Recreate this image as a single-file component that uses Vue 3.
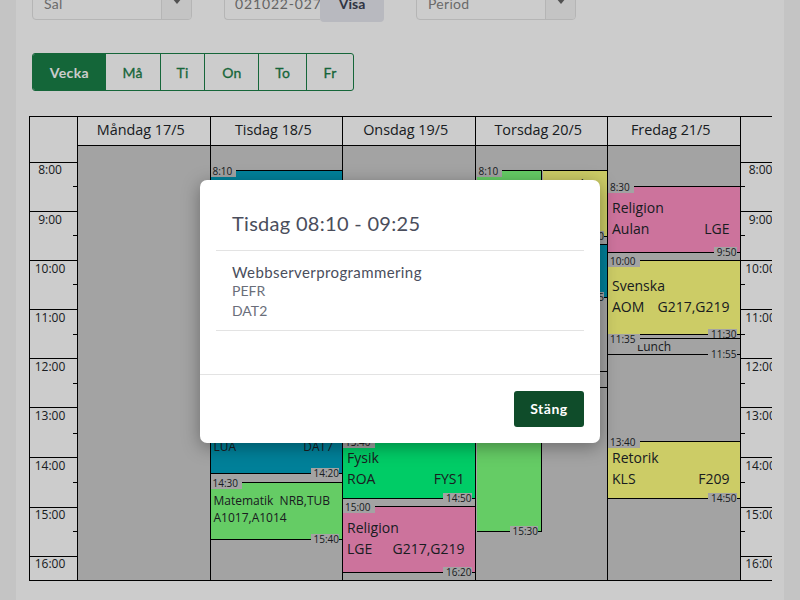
<script setup>
const rows = [
  { h:'8:00', height:49, tick:23, up:true },
  { h:'9:00', height:49, tick:23 },
  { h:'10:00', height:49, tick:23 },
  { h:'11:00', height:49, tick:24 },
  { h:'12:00', height:49, tick:24 },
  { h:'13:00', height:50, tick:25 },
  { h:'14:00', height:50, tick:24 },
  { h:'15:00', height:49, tick:23, up:true },
  { h:'16:00', height:24, tick:-9, up:true },
]
const pos = (t) => { const [h,m]=t.split(':').map(Number); return 15.8 + (h*60+m-480)*0.82 }
const st = (e) => {
  const s = { top: pos(e.from)+'px', height: (pos(e.to)-pos(e.from)+1)+'px', background: e.bg || 'transparent' }
  if (e.half==='l') { s.left='1px'; s.width='65.5px'; }
  if (e.half==='r') { s.left='67px'; s.right='0'; }
  return s
}
const T='#00a0c0', G='#7fff7f', Y='#ffff80', P='#ff90c4', B='#00ff80'
const days = [
  { name:'Måndag 17/5', events:[] },
  { name:'Tisdag 18/5', events:[
    { from:'8:10', to:'9:25', bg:T, a:'Webbserverprogrammering', b:'PEFR', c:'DAT2', small:true },
    { from:'12:55', to:'14:20', bg:T, a:'Webbserverprogrammering', b:'LUA', c:'DAT7', small:true },
    { from:'14:30', to:'15:40', bg:G, a:'Matematik\u00a0\u00a0NRB,TUB', b:'A1017,A1014', c:'', small:true },
  ]},
  { name:'Onsdag 19/5', events:[
    { from:'13:40', to:'14:50', bg:B, a:'Fysik', b:'ROA', c:'FYS1' },
    { from:'15:00', to:'16:20', bg:P, a:'Religion', b:'LGE', c:'G217,G219' },
  ]},
  { name:'Torsdag 20/5', events:[
    { from:'8:10', to:'15:30', bg:G, half:'l', a:'', b:'', c:'' },
    { from:'8:10', to:'9:30', bg:Y, half:'r', a:'Franska', b:'', c:'', tight:true, nostart:true },
    { from:'9:40', to:'10:45', bg:T, half:'r', a:'', b:'', c:'', nostart:true },
    { from:'12:15', to:'12:35', half:'r', a:'', b:'', c:'', nostart:true, noend:true },
  ]},
  { name:'Fredag 21/5', events:[
    { from:'8:30', to:'9:50', bg:P, a:'Religion', b:'Aulan', c:'LGE' },
    { from:'10:00', to:'11:30', bg:Y, a:'Svenska', b:'AOM', c:'G217,G219' },
    { from:'11:35', to:'11:55', lunch:true, a:'Lunch', b:'', c:'' },
    { from:'13:40', to:'14:50', bg:Y, a:'Retorik', b:'KLS', c:'F209' },
  ]},
]
const tabs = ['Vecka','Må','Ti','On','To','Fr']
</script>

<template>
  <div class="page">
    <main class="content">
      <div class="filters">
        <div class="select"><span class="val">Sal</span><span class="arrow"><i></i></span></div>
        <div class="search"><span class="input">021022-0273</span><span class="visa">Visa</span></div>
        <div class="select"><span class="val">Period</span><span class="arrow"><i></i></span></div>
      </div>
      <div class="tabs">
        <span v-for="(t,i) in tabs" :key="t" class="tab" :class="['t'+i,{active:i===0}]">{{ t }}</span>
      </div>
      <div class="schedule">
        <div class="timecol left">
          <div class="timehead"></div>
          <div v-for="r in rows" :key="r.h" class="hour" :class="{up:r.up}" :style="{height:r.height+'px'}"><span>{{ r.h }}</span><b v-if="r.tick>0" :style="{top:r.tick+'px'}"></b></div>
        </div>
        <div v-for="d in days" :key="d.name" class="day">
          <div class="dayhead">{{ d.name }}</div>
          <div class="daybody">
            <div v-for="e in d.events" :key="e.from+e.a" class="event" :class="{half:e.half,lefthalf:e.half==='l',small:e.small,lunch:e.lunch,tight:e.tight}" :style="st(e)">
              <span v-if="!e.nostart" class="start">{{ e.from }}</span>
              <div class="txt">
                <div class="r1">{{ e.a }}</div>
                <div v-if="e.b||e.c" class="r2"><span>{{ e.b }}</span><span>{{ e.c }}</span></div>
              </div>
              <span v-if="!e.noend" class="end">{{ e.to }}</span>
            </div>
          </div>
        </div>
        <div class="timecol right">
          <div class="timehead"></div>
          <div v-for="r in rows" :key="r.h" class="hour" :class="{up:r.up}" :style="{height:r.height+'px'}"><span>{{ r.h }}</span><b v-if="r.tick>0" :style="{top:r.tick+'px'}"></b></div>
        </div>
      </div>
    </main>
    <div class="overlay">
      <section class="modal">
        <div class="mbody">
          <h2>Tisdag 08:10 - 09:25</h2>
          <div class="info">
            <h3>Webbserverprogrammering</h3>
            <p>PEFR</p>
            <p>DAT2</p>
          </div>
        </div>
        <div class="mfoot"><button>Stäng</button></div>
      </section>
    </div>
  </div>
</template>

<style>
html, body { margin: 0; background: #f5f5f5; }
</style>

<style scoped>
.page { height: 600px; overflow: hidden; position: relative; }
.content { display: flow-root; margin: 0 16px; background: #fff; height: 600px; padding: 0 16px; box-sizing: border-box; font-family: "Lato", sans-serif; }
.filters { display: flex; gap: 32px; margin-top: -18px; height: 38px; }
.select { width: 160px; height: 38px; box-sizing: border-box; border: 1px solid #e3e3e3; border-radius: 4px; display: flex; justify-content: space-between; align-items: center; color: #858585; font-size: 14px; padding-left: 11px; }
.val { padding-top: 4px; letter-spacing: .3px; }
.arrow { width: 29px; height: 100%; border-left: 1px solid #e3e3e3; background: #f5f5f5; display: flex; align-items: center; justify-content: center; border-radius: 0 3px 3px 0; }
.arrow i { display: block; width: 0; height: 0; border: 5px solid transparent; border-top: 6px solid #666; margin-top: 5px; }
.search { width: 160px; display: flex; }
.input { width: 96px; box-sizing: border-box; border: 1px solid #e3e3e3; border-radius: 4px 0 0 4px; height: 38px; padding: 12px 0 0 10px; color: #7d7d7d; font-size: 14px; letter-spacing: .85px; overflow: hidden; white-space: nowrap; border-right: 0; line-height: 18px; }
.visa { width: 64px; height: 40px; background: #e7e8ef; border-radius: 0 4px 4px 4px; color: #3d4354; font-size: 14px; font-weight: 700; text-align: center; line-height: 44px; }
.tabs { display: flex; margin-top: 33px; height: 38px; width: 322px; box-sizing: border-box; border: 1px solid #1b8048; border-radius: 3px; overflow: hidden; }
.tab { display: flex; align-items: center; justify-content: center; font-size: 14px; color: #1b8048; border-left: 1px solid #1b8048; box-sizing: border-box; letter-spacing: .3px; -webkit-text-stroke: .3px #1b8048; }
.t0 { width: 73px; border-left: 0; background: #198048; color: #fff; font-weight: 700; letter-spacing: .4px; -webkit-text-stroke: 0; }
.t1 { width: 54px; border-left: 0; }
.t2 { width: 45px; }
.t3 { width: 54px; }
.t4 { width: 48px; }
.t5 { width: 47px; }
.schedule { display: grid; grid-template-columns: 48px repeat(5, 132.5px) 48px; width: 743px; margin: 25px 0 0 -3px; overflow: hidden; border-top: 1px solid #000; border-bottom: 1px solid #000; height: 465px; box-sizing: border-box; font-family: "Open Sans", sans-serif; color: #212529; }
.timecol { border-left: 1px solid #000; box-sizing: border-box; }
.timehead { height: 45px; }
.hour { border-top: 1px solid #000; box-sizing: border-box; position: relative; font-size: 12px; line-height: 16px; }
.hour span { display: block; width: 40px; text-align: center; }
.hour.up span { margin-top: -1px; }
.hour b { position: absolute; height: 1px; width: 4px; background: #000; }
.left .hour b { right: 0; }
.right .hour b { left: 0; }
.day { border-left: 1px solid #000; box-sizing: border-box; display: flex; flex-direction: column; min-width: 0; }
.dayhead { height: 28px; flex: none; border-bottom: 1px solid #000; text-align: center; font-size: 14.4px; line-height: 25px; padding-right: 6px; }
.daybody { flex: 1; background: #ccc; position: relative; }
.event { position: absolute; left: 0; right: 0; border-top: 1px solid #000; border-bottom: 1px solid #000; box-sizing: border-box; font-size: 14px; color: #212529; }
.lefthalf { border-right: 1px solid #000; }
.start { position: absolute; left: 0; top: -5px; background: #ccc; font-size: 10px; line-height: 11px; padding: 0 4px 0 2px; }
.end { position: absolute; right: 3px; bottom: -6px; background: #ccc; font-size: 10px; line-height: 11px; padding: 0 0 0 3px; }
.txt { height: 100%; box-sizing: border-box; display: flex; flex-direction: column; justify-content: center; padding: 0 10px 3px 4px; line-height: 21px; }
.r2 { display: flex; justify-content: space-between; }
.small { font-size: 12px; }
.small .txt { line-height: 17px; padding: 0 9px 3px 3px; }
.lunch { font-size: 12px; }
.lunch .txt { padding: 0 0 0 29px; line-height: 14px; }
.tight .txt { justify-content: flex-start; padding: 5px 2px 0; line-height: 18px; }
.overlay { position: absolute; z-index: 10; inset: 0; background: rgba(0,0,0,.2); display: flex; justify-content: center; align-items: flex-start; padding-top: 180px; box-sizing: border-box; }
.modal { width: 400px; height: 263px; background: #fff; border-radius: 7px; box-shadow: 0 4px 18px rgba(0,0,0,.35); display: flex; flex-direction: column; font-family: "Lato", sans-serif; color: #4a4e5c; }
.mbody { flex: 1; padding: 0 16px; border-bottom: 1px solid #e3e3e3; }
h2 { margin: 0; height: 71px; box-sizing: border-box; padding: 30px 16px 0; font-size: 20px; line-height: 26px; font-weight: 400; border-bottom: 1px solid #e3e3e3; letter-spacing: .3px; }
.info { height: 80px; box-sizing: border-box; padding: 12px 16px 0; border-bottom: 1px solid #e3e3e3; }
h3 { margin: 0; font-size: 15px; line-height: 18px; font-weight: 400; letter-spacing: .4px; }
p { margin: 0; font-size: 14px; line-height: 20px; color: #6a6e7a; }
.mfoot { height: 68px; flex: none; display: flex; justify-content: flex-end; align-items: flex-start; padding: 16px 16px 0; box-sizing: border-box; }
button { width: 70px; height: 36px; background: #0f4c2a; color: #fff; border: 0; border-radius: 3px; font-family: "Lato", sans-serif; font-size: 14px; font-weight: 700; letter-spacing: .5px; padding: 0 0 2px; }
</style>
